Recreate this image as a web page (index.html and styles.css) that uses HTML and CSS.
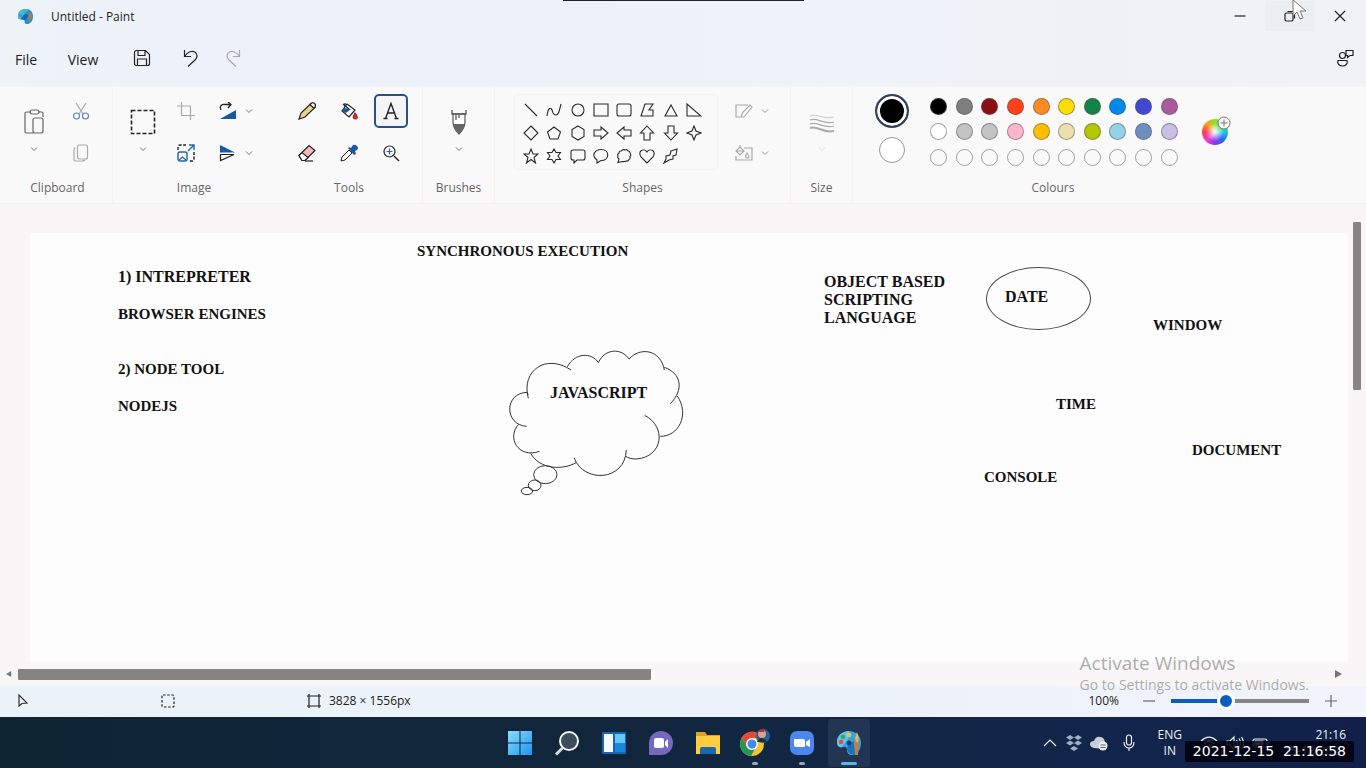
FILE: index.html
```html
<!DOCTYPE html>
<html lang="en">
<head>
<meta charset="utf-8">
<title>Untitled - Paint</title>
<link rel="stylesheet" href="styles.css">
</head>
<body>
<svg class="defs" aria-hidden="true">
  <symbol id="chev" viewBox="0 0 8 8"><path d="M1 2.500l3 3 3-3" fill="none" stroke="currentColor"/></symbol>
  <symbol id="palette" viewBox="0 0 26 26">
    <path d="M13 1C6 1 1 6 1 12c0 4 3 6 6 5 2-1 4 0 4 3 0 3 2 5 5 5 6-1 9-6 9-12C25 6 20 1 13 1z" fill="#35a3dc"/>
    <path d="M1 12C1 6 6 1 13 1l-1 8-6 8c-3 1-5-1-5-5z" fill="#67c3ee"/>
    <path d="M11 19c0-5 6-9 8-7l3 9c-2 3-9 6-11-2z" fill="#1872bd"/>
    <circle cx="7" cy="7" r="2.400" fill="#39a86a"/><circle cx="13" cy="5" r="2.400" fill="#d8c647"/><circle cx="5" cy="12" r="2.200" fill="#d5543f"/><circle cx="13" cy="13" r="2.400" fill="#0e4277"/>
    <path d="M19 8l3-1 1 6-1 12h-3l-1-12z" fill="#bd824b"/><path d="M19 8l2-6 2 6-1 4h-2z" fill="#e4b16e"/>
  </symbol>
  <symbol id="app-palette" viewBox="0 0 18 18">
    <path d="M9 1C4 1 1 4 1 9c0 3 2 3 4 3 2-1 3 0 3 2 0 3 2 3 4 3 3-1 5-4 5-8 0-5-3-8-8-8z" fill="#2090d8"/>
    <path d="M1 9c0-5 3-8 8-8l3 1-5 5-3 5C2 12 1 11 1 9z" fill="#43b9e9"/>
    <path d="M4 12l5-6 3 2-3 5z" fill="#1465ad"/>
    <circle cx="8" cy="4" r="1.600" fill="#58b96e"/><circle cx="4" cy="8" r="1.500" fill="#30a883"/>
    <path d="M13 5l2-1 1 5-2 7h-1l-1-7z" fill="#a77a59"/>
  </symbol>
</svg>
<div class="desktop">
  <header class="titlebar">
    <svg class="app-icon" viewBox="0 0 18 18"><use href="#app-palette"/></svg>
    <h1 class="title">Untitled - Paint</h1>
    <div class="win-buttons">
      <button class="win-btn" aria-label="Minimise"><svg viewBox="0 0 12 12" class="i12 line"><path d="M.5 6h11"/></svg></button>
      <button class="win-btn hovered" aria-label="Restore"><svg viewBox="0 0 12 12" class="i12 line"><rect x="1" y="3" width="8" height="8" rx="1.500"/><path d="M3.500 1.500h5a2 2 0 0 1 2 2v5"/></svg></button>
      <button class="win-btn" aria-label="Close"><svg viewBox="0 0 12 12" class="i12 line"><path d="M1 1l10 10M11 1L1 11"/></svg></button>
    </div>
  </header>
  <nav class="menubar">
    <button class="menu file">File</button>
    <button class="menu view">View</button>
    <button class="menu icon save" aria-label="Save"><svg viewBox="0 0 18 18" class="i18 line"><path d="M3.500 1.500h9l4 4v9a2 2 0 0 1-2 2h-11a2 2 0 0 1-2-2v-11a2 2 0 0 1 2-2zM5 2v4.500h7V2M4.500 16v-6h9v6"/></svg></button>
    <button class="menu icon undo" aria-label="Undo"><svg viewBox="0 0 18 18" class="i18 line"><path d="M2.500 1v6.500H9M3 7c4-6 9-5 11-3 2 3 1 5-1 7l-7 6.500"/></svg></button>
    <button class="menu icon undo faded" aria-label="Redo"><svg viewBox="0 0 18 18" class="i18 line"><path d="M15.500 1v6.500H9M15 7C11 1 6 2 4 4c-2 3-1 5 1 7l7 6.500"/></svg></button>
    <button class="menu icon share" aria-label="Account"><svg viewBox="0 0 18 18" class="i18 line"><circle cx="6.500" cy="6.500" r="3"/><path d="M2 11.500h9c1 3-1 5.500-4.500 5.500S1 14.500 2 11.500zM10 1.500h7v5h-3l-2.500 2v-2H10z"/></svg></button>
  </nav>

  <section class="ribbon" aria-label="Tools">
    <div class="group clipboard">
      <div class="content">
        <button class="big" aria-label="Paste"><svg viewBox="0 0 24 26" class="i24 line grey"><path d="M9 3H4.500A1.500 1.500 0 0 0 3 4.500v18A1.500 1.500 0 0 0 4.500 24H11M16 3h3.500A1.500 1.500 0 0 1 21 4.500V8"/><rect x="8" y="1" width="9" height="4" rx="2"/><rect x="11" y="9" width="10" height="15" rx="2"/></svg><svg class="chev"><use href="#chev"/></svg></button>
        <div class="tools one">
          <button aria-label="Cut"><svg viewBox="0 0 18 18" class="i18 line pale"><path d="M4 1l7 11M14 1L7 12"/><circle cx="4.500" cy="14" r="3" stroke="#5b87bd"/><circle cx="13.500" cy="14" r="3" stroke="#5b87bd"/></svg></button>
          <button aria-label="Copy"><svg viewBox="0 0 18 18" class="i18 line pale"><rect x="5.500" y="1" width="10" height="14" rx="2"/><path d="M3 3.500c-1 1-1 2-1 3V15a2 2 0 0 0 2 2h6c2 0 2 0 3-1"/></svg></button>
        </div>
      </div>
      <h2>Clipboard</h2>
    </div>
    <div class="group image">
      <div class="content">
        <button class="big" aria-label="Select"><svg viewBox="0 0 26 26" class="i26 line"><rect x="1.500" y="1.500" width="23" height="23" stroke-width="1.600" stroke-dasharray="4 2"/></svg><svg class="chev"><use href="#chev"/></svg></button>
        <div class="tools two">
          <button aria-label="Crop"><svg viewBox="0 0 18 18" class="i18 line pale"><path d="M4.500 0v13.500H18M0 4h13.500V18"/></svg></button>
          <button class="wide" aria-label="Rotate"><svg viewBox="0 0 18 18" class="i18"><path d="M2 8C0 4 3 2 6 2.500h5M9 0l3 2.500L9 6" fill="none" stroke="#222" stroke-width="1.300"/><path d="M17 8v9H1z" fill="#1857a8"/></svg><svg class="chev"><use href="#chev"/></svg></button>
          <button aria-label="Resize"><svg viewBox="0 0 18 18" class="i18 line"><path d="M1 6V3q0-2 2-2h6M17 8v7q0 2-2 2h-3" stroke-dasharray="3 1.500" stroke-width="1.400"/><path d="M11 7l6-6m-5 0h5v5" stroke="#1d65ad" stroke-width="1.400"/><rect x="1" y="8" width="9" height="9" rx="2" stroke="#1d65ad" stroke-width="1.400"/><path d="M2 16l3.500-3L9 16" stroke="#1d65ad"/></svg></button>
          <button class="wide" aria-label="Flip"><svg viewBox="0 0 18 18" class="i18"><path d="M1 1l15 7.500H1z" fill="#1857a8"/><path d="M1.500 10.500H15L1.500 16.500z" fill="none" stroke="#222" stroke-width="1.200"/></svg><svg class="chev"><use href="#chev"/></svg></button>
        </div>
      </div>
      <h2>Image</h2>
    </div>
    <div class="group toolbox">
      <div class="content">
        <div class="tools three">
          <button aria-label="Pencil"><svg viewBox="0 0 18 18" class="i18 line"><path d="M1 17l2-6L13 1.500q2-1 3.500.5t.5 3.500L7 15z" fill="#ecd28a"/><path d="M12 2.500L15.500 6l1.500-1q1-2-.5-3.500T13 1.500z" fill="#fff"/></svg></button>
          <button aria-label="Fill"><svg viewBox="0 0 18 18" class="i18 line"><path d="M7 2l8 6-6 7-7-6z" fill="#fff"/><path d="M4 6l7 1-5 4-4-2z" fill="#1857a8" stroke="none"/><path d="M3 2l6 5M5 1v4"/><path d="M15 11q4 5 1 6-4 0-2-4z" fill="#d13a1f" stroke="#922"/></svg></button>
          <button class="active" aria-label="Text"><svg viewBox="0 0 18 18" class="i18 line"><path d="M3.500 16.500L9 1.500l5.500 15M5.500 11h7M1.500 16.500h4M12.500 16.500h4" stroke-width="1.400"/></svg></button>
          <button aria-label="Eraser"><svg viewBox="0 0 18 18" class="i18 line"><path d="M1 11.500L11 1.500l6 5L7 16.500H4z" fill="#f4b7bb"/><path d="M1 11.500l3-3 6 5-3 3H4z" fill="#fff"/><path d="M7 17h8"/></svg></button>
          <button aria-label="Colour picker"><svg viewBox="0 0 18 18" class="i18"><path d="M1 17l1-4 7-7 3 3-7 7z" fill="#fff" stroke="#222"/><path d="M8 4l1-1 2 1 2-3q2-1 4 1t0 4l-2 1 1 3-2 1z" fill="#1857a8"/></svg></button>
          <button aria-label="Magnifier"><svg viewBox="0 0 18 18" class="i18 line"><circle cx="7.500" cy="7.500" r="5.500"/><path d="M12 12l5 5" stroke-width="1.400"/><path d="M7.500 4.500v6M4.500 7.500h6" stroke="#276c8d"/></svg></button>
        </div>
      </div>
      <h2>Tools</h2>
    </div>
    <div class="group brushes">
      <div class="content">
        <button class="big" aria-label="Brushes"><svg viewBox="0 0 24 26" class="i24 line"><path d="M6 5h12v8c0 5-3 9-6 12-3-3-6-7-6-12z" fill="#fff" stroke="#555"/><path d="M6 15h12c-1 4-3 7-6 10-3-3-5-6-6-10z" fill="#666" stroke="none"/><path d="M5 1v4h14V1M9 6v5M12 6v3" stroke="#555" stroke-width="1.300"/></svg><svg class="chev"><use href="#chev"/></svg></button>
      </div>
      <h2>Brushes</h2>
    </div>
    <div class="group shapes">
      <div class="content">
        <div class="gallery">
          <button aria-label="Line"><svg viewBox="0 0 16 16"><path d="M2 2l12 12"/></svg></button>
          <button aria-label="Curve"><svg viewBox="0 0 16 16"><path d="M1 14C2 5 5 5 6 8s1 5 4 5 3-4 5-11"/></svg></button>
          <button aria-label="Oval"><svg viewBox="0 0 16 16"><circle cx="8" cy="8" r="6"/></svg></button>
          <button aria-label="Rectangle"><svg viewBox="0 0 16 16"><path d="M1 2h14v12H1z"/></svg></button>
          <button aria-label="Rounded rectangle"><svg viewBox="0 0 16 16"><rect x="1" y="2" width="14" height="12" rx="2"/></svg></button>
          <button aria-label="Polygon"><svg viewBox="0 0 16 16"><path d="M6 2h8l-4 6h4v6H2z"/></svg></button>
          <button aria-label="Triangle"><svg viewBox="0 0 16 16"><path d="M8 3l6 11H2z"/></svg></button>
          <button aria-label="Right triangle"><svg viewBox="0 0 16 16"><path d="M1 2v12h14z"/></svg></button>
          <button aria-label="Diamond"><svg viewBox="0 0 16 16"><path d="M8 1l7 7-7 7-7-7z"/></svg></button>
          <button aria-label="Pentagon"><svg viewBox="0 0 16 16"><path d="M8 2l6.500 5-2.500 7H4L1.500 7z"/></svg></button>
          <button aria-label="Hexagon"><svg viewBox="0 0 16 16"><path d="M8 1l6 3.500v7L8 15l-6-3.500v-7z"/></svg></button>
          <button aria-label="Right arrow"><svg viewBox="0 0 16 16"><path d="M1 5h7V2l7 6-7 6v-3H1z"/></svg></button>
          <button aria-label="Left arrow"><svg viewBox="0 0 16 16"><path d="M15 5H8V2L1 8l7 6v-3h7z"/></svg></button>
          <button aria-label="Up arrow"><svg viewBox="0 0 16 16"><path d="M5 15V8H1.500L8 1l6.500 7H11v7z"/></svg></button>
          <button aria-label="Down arrow"><svg viewBox="0 0 16 16"><path d="M5 1v7H1.500L8 15l6.500-7H11V1z"/></svg></button>
          <button aria-label="Four-point star"><svg viewBox="0 0 16 16"><path d="M8 1l2 5 5 2-5 2-2 5-2-5-5-2 5-2z"/></svg></button>
          <button aria-label="Five-point star"><svg viewBox="0 0 16 16"><path d="M8 1l2 5h5l-4 3.500L12.500 15 8 11.500 3.500 15 5 9.500 1 6h5z"/></svg></button>
          <button aria-label="Six-point star"><svg viewBox="0 0 16 16"><path d="M8 1l2 3.500h4.500L12 8l2.500 3.500H10L8 15l-2-3.500H1.500L4 8 1.500 4.500H6z"/></svg></button>
          <button aria-label="Rounded callout"><svg viewBox="0 0 16 16"><path d="M3 2h10q2 0 2 2v6q0 2-2 2H7l-3 3v-3H3q-2 0-2-2V4q0-2 2-2z"/></svg></button>
          <button aria-label="Oval callout"><svg viewBox="0 0 16 16"><path d="M4 12C-3 7 3 1.500 8 1.500c9 0 9 11 0 11L4 15z"/></svg></button>
          <button aria-label="Cloud callout"><svg viewBox="0 0 16 16"><path d="M3 11Q1 9.500 2 8 1 6 3 5q0-2 2-2 2-2 4-1 2-1 3 1 2 0 2 2 1.500 2 0 3.500.5 2-1 3-1 2-3 1.500-2 1-4 .5l-4 1z"/></svg></button>
          <button aria-label="Heart"><svg viewBox="0 0 16 16"><path d="M8 15L2 9C-2 3 5-.5 8 4c3-4.500 10-1 6 5z"/></svg></button>
          <button aria-label="Lightning"><svg viewBox="0 0 16 16"><path d="M8 3l6-2-1 6-3 1v3l-4 1-5 3 2-4V8l4-1z"/></svg></button>
        </div>
        <div class="tools one">
          <button class="wide faded" aria-label="Outline"><svg viewBox="0 0 18 18" class="i18 line"><path d="M13 3H1v12h8l8-10-2-2-7 7-2 5"/></svg><svg class="chev"><use href="#chev"/></svg></button>
          <button class="wide faded" aria-label="Shape fill"><svg viewBox="0 0 18 18" class="i18 line"><path d="M9 4h8v12H1v-4"/><path d="M1 7l4-4 4 4-4 4zM5 1v3M1 7h8M12 9q4 5 0 5-3-1 0-5z"/></svg><svg class="chev"><use href="#chev"/></svg></button>
        </div>
      </div>
      <h2>Shapes</h2>
    </div>
    <div class="group size">
      <div class="content">
        <button class="big faded" aria-label="Size"><svg viewBox="0 0 24 26" class="i24 line"><path d="M0 7c8-3 13 4 24 1" stroke-width=".6"/><path d="M0 11c8-3 13 5 24 2M0 15c8-3 13 5 24 2"/><path d="M0 19c8-3 13 6 24 3" stroke-width="2"/></svg><svg class="chev"><use href="#chev"/></svg></button>
      </div>
      <h2>Size</h2>
    </div>
    <div class="group colours">
      <div class="content">
        <div class="current">
          <button class="primary" aria-label="Colour 1"></button>
          <button class="secondary" aria-label="Colour 2"></button>
        </div>
        <div class="swatches">
          <button class="c-black" aria-label="Black"></button><button class="c-grey" aria-label="Grey"></button><button class="c-maroon" aria-label="Dark red"></button><button class="c-red" aria-label="Red"></button><button class="c-orange" aria-label="Orange"></button><button class="c-yellow" aria-label="Yellow"></button><button class="c-green" aria-label="Green"></button><button class="c-blue" aria-label="Turquoise"></button><button class="c-indigo" aria-label="Indigo"></button><button class="c-purple" aria-label="Purple"></button>
          <button class="c-white" aria-label="White"></button><button class="c-silver" aria-label="Light grey"></button><button class="c-silver" aria-label="Brown"></button><button class="c-rose" aria-label="Rose"></button><button class="c-gold" aria-label="Gold"></button><button class="c-cream" aria-label="Light yellow"></button><button class="c-lime" aria-label="Lime"></button><button class="c-sky" aria-label="Light turquoise"></button><button class="c-steel" aria-label="Blue grey"></button><button class="c-lavender" aria-label="Lavender"></button>
          <button aria-label="Custom 1"></button><button aria-label="Custom 2"></button><button aria-label="Custom 3"></button><button aria-label="Custom 4"></button><button aria-label="Custom 5"></button><button aria-label="Custom 6"></button><button aria-label="Custom 7"></button><button aria-label="Custom 8"></button><button aria-label="Custom 9"></button><button aria-label="Custom 10"></button>
        </div>
        <button class="wheel" aria-label="Edit colours"><span class="hue"></span><svg class="plus" viewBox="0 0 14 14"><circle cx="7" cy="7" r="6" fill="#fafafa" stroke="#777"/><path d="M7 3.500v7M3.500 7h7" stroke="#777"/></svg></button>
      </div>
      <h2>Colours</h2>
    </div>
  </section>

  <main class="workspace">
    <div class="viewport">
      <div class="canvas">
        <span class="word w-sync">SYNCHRONOUS EXECUTION</span>
        <span class="word large w-interp">1) INTREPRETER</span>
        <span class="word w-browser">BROWSER ENGINES</span>
        <span class="word w-tool">2) NODE TOOL</span>
        <span class="word w-node">NODEJS</span>
        <svg class="cloud" viewBox="0 0 630 510"><path d="M115 175C92 90 170 40 243 90M232 80C255 38 305 36 325 68M325 68C345 24 395 24 417 57M417 57C450 20 512 28 523 90M523 82C575 100 582 150 541 191M562 168C600 225 565 290 511 289M464 226C530 260 520 350 440 357C425 357 415 354 407 349M409 330C405 425 280 430 252 353M258 368C220 390 150 390 122 340M149 334C82 357 50 290 86 253M110 259C42 255 42 158 112 157L114 165"/><ellipse cx="166" cy="404" rx="35" ry="27"/><ellipse cx="134" cy="436" rx="19" ry="16"/><ellipse cx="111" cy="453" rx="17" ry="11"/></svg>
        <span class="word large w-js">JAVASCRIPT</span>
        <span class="word large w-object">OBJECT BASED<br>SCRIPTING<br>LANGUAGE</span>
        <span class="oval"></span>
        <span class="word large w-date">DATE</span>
        <span class="word w-window">WINDOW</span>
        <span class="word w-time">TIME</span>
        <span class="word w-document">DOCUMENT</span>
        <span class="word w-console">CONSOLE</span>
      </div>
    </div>
    <div class="vscroll"><div class="vthumb"></div></div>
    <div class="hscroll">
      <svg class="arrow" viewBox="0 0 8 8"><path d="M7 0v8L0 4z"/></svg>
      <div class="htrack"><div class="hthumb"></div></div>
      <svg class="arrow" viewBox="0 0 8 8"><path d="M1 0v8l7-4z"/></svg>
    </div>
  </main>

  <footer class="statusbar">
    <div class="cell pointer"><svg viewBox="0 0 14 14" class="i14 line"><path d="M3 1v11l3-2.500 5-.5z"/></svg></div>
    <div class="cell selection"><svg viewBox="0 0 14 14" class="i14 line"><rect x="1" y="1" width="12" height="12" rx="1" stroke-dasharray="2.500 1.700"/></svg></div>
    <div class="cell"><svg viewBox="0 0 14 14" class="i14 line"><path d="M0 2h14M0 12h14M2 0v14M12 0v14"/></svg><span>3828 × 1556px</span></div>
    <div class="zoom">
      <label for="zoom">100%</label>
      <button aria-label="Zoom out"><svg viewBox="0 0 12 12" class="i12 line grey"><path d="M0 6h12"/></svg></button>
      <input id="zoom" type="range" min="0" max="100" value="38">
      <button aria-label="Zoom in"><svg viewBox="0 0 12 12" class="i12 line grey"><path d="M0 6h12M6 0v12"/></svg></button>
    </div>
    <div class="watermark"><strong>Activate Windows</strong><span>Go to Settings to activate Windows.</span></div>
  </footer>

  <div class="taskbar">
    <div class="apps">
      <button aria-label="Start"><svg viewBox="0 0 26 26"><defs><linearGradient id="win" x2="1" y2="1"><stop stop-color="#8bdcff"/><stop offset="1" stop-color="#1c95ee"/></linearGradient></defs><path fill="url(#win)" d="M1 1h11.500v11.500H1zM13.500 1H25v11.500H13.500zM1 13.500h11.500V25H1zM13.500 13.500H25V25H13.500z"/></svg></button>
      <button aria-label="Search"><svg viewBox="0 0 26 26"><circle cx="15" cy="11" r="9" fill="#3b4c5a" stroke="#f1f5f7" stroke-width="2"/><path d="M8.500 18L2 24.500" stroke="#d5dde2" stroke-width="3"/></svg></button>
      <button aria-label="Widgets"><svg viewBox="0 0 26 26"><rect x="1" y="2" width="24" height="22" rx="1" fill="#1565b3"/><path d="M3 4h9v18H3z" fill="#f5f9fc"/><path d="M14 4h10v9H14z" fill="#64c8fa"/><path d="M14 13h10v9H14z" fill="#1688de"/></svg></button>
      <button aria-label="Chat"><svg viewBox="0 0 26 26"><path d="M1 25V13a12 12 0 1 1 12 12z" fill="#7568bd"/><rect x="6" y="8" width="10" height="10" rx="2" fill="#fff"/><path d="M17 12l3-3v9l-3-3z" fill="#fff"/></svg></button>
      <button aria-label="File Explorer"><svg viewBox="0 0 26 26"><path d="M1 2h9l2 3h13v18H1z" fill="#dda126"/><path d="M1 6h24v18H1z" fill="#ffcc42"/><path d="M5 24v-5q0-2 2-2h12q2 0 2 2v5z" fill="#1769b0"/></svg></button>
      <button class="running" aria-label="Chrome"><svg class="chrome" viewBox="0 0 32 30"><circle cx="13" cy="16" r="12" fill="#f2c52f"/><path d="M2.600 10A12 12 0 0 1 24 10H13l-5 8z" fill="#e04c36"/><path d="M2.600 10A12 12 0 0 0 12 28l5-9-9-1z" fill="#239657"/><circle cx="13" cy="16" r="6" fill="#fff"/><circle cx="13" cy="16" r="4.500" fill="#4389ea"/><circle cx="24" cy="8" r="7" fill="#245f9d"/><circle cx="23" cy="6" r="4" fill="#d9a38b"/><path d="M19 4q2-4 7-3l-1 3z" fill="#b92d39"/><path d="M18 14q4-8 10 0z" fill="#292930"/></svg></button>
      <button class="running" aria-label="Zoom"><svg viewBox="0 0 26 26"><rect x="1" y="1" width="24" height="24" rx="7" fill="#4b87ee"/><path d="M5 9h9q2 0 2 2v6H7q-2 0-2-2zM17 12l4-3v8l-4-2z" fill="#fff"/></svg></button>
      <button class="current-app" aria-label="Paint"><svg viewBox="0 0 26 26"><use href="#palette"/></svg></button>
    </div>
    <div class="tray">
      <svg viewBox="0 0 16 16" class="i16 line"><path d="M2 11l6-6 6 6"/></svg>
      <svg viewBox="0 0 16 16" class="i16" fill="#9fb0bf"><path d="M4 0l4 2.500L4 5 0 2.500zM12 0l4 2.500L12 5 8 2.500zM4 5.500L8 8l-4 2.500L0 8zM12 5.500L16 8l-4 2.500L8 8zM8 11l4 2.500L8 16l-4-2.500z"/></svg>
      <svg viewBox="0 0 18 16" class="i18"><path d="M4 13q-4-1-4-4t4-3q2-5 6-4 4 0 5 5 3 1 2 4l-3 3z" fill="#c6ced6"/><circle cx="13" cy="11" r="4.500" fill="#e8edf2"/><path d="M10.500 10h5M10.500 12.500h5" stroke="#567"/></svg>
      <svg viewBox="0 0 14 18" class="i18 line mic"><rect x="4.500" y="1" width="5" height="10" rx="2.500"/><path d="M2 8c0 8 10 8 10 0M7 14v3"/></svg>
      <div class="lang">ENG<br>IN</div>
      <svg viewBox="0 0 18 16" class="i18 line"><path d="M1 6q8-8 16 0M4 9q5-5 10 0M6.500 12q2.500-3 5 0"/></svg>
      <svg viewBox="0 0 18 16" class="i18 line"><path d="M1 6h3l4-4v12l-4-4H1zM10.500 5q2 3 0 6M13 3.500q3 4.500 0 9M15.500 2q4 6 0 12"/></svg>
      <svg viewBox="0 0 18 16" class="i18 line"><rect x="1" y="4" width="14" height="8" rx="2"/><path d="M3 6h8v4H3z" fill="currentColor"/><path d="M17 6v4"/></svg>
      <div class="clock">21:16<br>15-12-2021</div>
    </div>
    <div class="stamp">2021-12-15  21:16:58</div>
  </div>

  <div class="edge"></div>
  <svg class="mouse" viewBox="0 0 16 22"><path d="M2 1v16l4-4 3 7 3-1-3-7h6z" fill="#fff" stroke="#777"/></svg>
</div>
</body>
</html>
```
FILE: styles.css
```css
* { box-sizing: border-box; }
body {
  margin: 0;
  font-family: "Open Sans", "Noto Sans", sans-serif;
  font-size: 12px;
  color: #222;
}
button {
  border: 0;
  padding: 0;
  background: none;
  font: inherit;
  color: inherit;
  display: flex;
  align-items: center;
  justify-content: center;
}
svg { display: block; flex: none; }
.defs { position: absolute; width: 0; height: 0; }
.line { fill: none; stroke: currentColor; stroke-width: 1.2; }
.i12 { width: 12px; height: 12px; }
.i14 { width: 14px; height: 14px; }
.i16 { width: 16px; height: 16px; }
.i18 { width: 18px; height: 18px; }
.i24 { width: 24px; height: 26px; }
.i26 { width: 26px; height: 26px; }
.grey { color: #666; }
.pale { color: #aaa; }
.faded { color: #aaa; }

.desktop {
  position: relative;
  display: flex;
  flex-direction: column;
  height: 100vh;
  overflow: hidden;
  background: linear-gradient(90deg, #edf3f7, #ecf1fa 20%, #eef3f9 60%, #eff2f6);
}

/* Window caption and menu */
.titlebar { display: flex; align-items: center; height: 32px; padding-left: 17px; }
.app-icon { width: 17px; height: 17px; }
.title { margin: 0 0 0 17px; font-size: 12px; font-weight: 400; }
.win-buttons { display: flex; margin-left: auto; padding-right: 1px; }
.win-btn { width: 50px; height: 30px; }
.hovered { background: #ebeef2; }
.menubar { display: flex; height: 54px; }
.menu { height: 54px; font-size: 14px; }
.icon { padding-bottom: 3px; }
.file { width: 52px; }
.view { width: 62px; }
.save { width: 56px; }
.undo { width: 42px; }
.share { width: 42px; margin-left: auto; }

/* Ribbon */
.ribbon {
  display: flex;
  height: 118px;
  padding-left: 3px;
  background: #faf9f9;
  border-top: 1px solid #f3f5f9;
  border-bottom: 1px solid #f0eeee;
}
.group { display: flex; flex-direction: column; align-items: center; border-right: 1px solid #f4f2f2; }
.group h2 { margin: 8px 0 0; font-size: 12px; line-height: 18px; font-weight: 400; color: #666; }
.content { display: flex; height: 84px; padding-top: 7px; align-items: flex-start; }
.clipboard { width: 110px; }
.image { width: 163px; border-color: transparent; }
.toolbox { width: 147px; }
.brushes { width: 72px; }
.shapes { width: 296px; }
.size { width: 62px; }
.colours { width: 401px; border-color: transparent; }
.clipboard .content { gap: 13px; }
.image .content { gap: 9px; }
.shapes .content { gap: 9px; padding-left: 6px; }
.big { flex-direction: column; justify-content: flex-start; width: 34px; height: 76px; padding-top: 15px; gap: 10px; }
.chev { width: 8px; height: 8px; color: #777; }
.faded .chev { color: #999; }
.size .chev { color: #ddd; }
.tools { display: grid; gap: 8px; }
.two { grid-template-columns: 34px 51px; }
.three { grid-template-columns: 34px 34px 34px; }
.tools button { width: 34px; height: 34px; border-radius: 5px; }
.tools .wide { width: 51px; justify-content: flex-start; padding-left: 8px; gap: 8px; }
.tools .active { border: 2px solid #2b5088; background: #f5f5f7; }
.gallery {
  display: grid;
  grid-template-columns: repeat(8, 1fr);
  grid-auto-rows: 23px;
  width: 204px;
  height: 76px;
  padding: 3px 11px 0 5px;
  border: 1px solid #f3f1f1;
  border-radius: 4px;
}
.gallery svg { width: 16px; height: 16px; fill: none; stroke: #2a2a2a; stroke-width: 1.1; }
.colours .content { gap: 17px; }
.current { display: flex; flex-direction: column; align-items: center; gap: 9px; }
.primary { width: 34px; height: 34px; border-radius: 50%; border: 2px solid #33415c; background: #000; box-shadow: inset 0 0 0 3px #fff; }
.secondary { width: 26px; height: 26px; border-radius: 50%; border: 1px solid #999; background: #fff; }
.swatches {
  display: grid;
  grid-template-columns: repeat(10, 1fr);
  grid-template-rows: repeat(3, 1fr);
  place-items: center;
  width: 256px;
  height: 76px;
}
.swatches button { width: 17px; height: 17px; border-radius: 50%; border: 1px solid rgba(90, 90, 90, .55); }
.c-black { background: #000; }
.c-grey { background: #7f7f7f; }
.c-maroon { background: #8b1014; }
.c-red { background: #ff4019; }
.c-orange { background: #ff8a24; }
.c-yellow { background: #fddc00; }
.c-green { background: #128348; }
.c-blue { background: #0088ec; }
.c-indigo { background: #4049d0; }
.c-purple { background: #ab5a9e; }
.c-white { background: #fff; }
.c-silver { background: #c3c3c3; }
.c-rose { background: #ffb5c7; }
.c-gold { background: #ffbd00; }
.c-cream { background: #ebe0ac; }
.c-lime { background: #b1c700; }
.c-sky { background: #94d2e8; }
.c-steel { background: #6c8fc0; }
.c-lavender { background: #c8bfe7; }
.wheel { position: relative; width: 32px; height: 76px; }
.hue {
  width: 26px;
  height: 26px;
  border-radius: 50%;
  background: radial-gradient(#fff, transparent 50%), conic-gradient(#8de32c, #35d95b, #18c8de 90deg, #236af0, #8b36f2 180deg, #ed3fd4, #ff3c4c 270deg, #ff9c21, #8de32c);
}
.plus { position: absolute; width: 14px; height: 14px; right: 0; top: 22px; }

/* Drawing area */
.workspace {
  flex: 1;
  min-height: 0;
  display: grid;
  grid-template-columns: 1fr 18px;
  grid-template-rows: 1fr 24px;
  background: #f8f6f6;
}
.viewport { padding: 29px 0 0 30px; min-width: 0; overflow: hidden; }
.canvas { position: relative; height: 100%; background: #fefdfd; }
.word {
  position: absolute;
  font-family: "Liberation Serif", serif;
  font-size: 15px;
  line-height: 18px;
  font-weight: 700;
  color: #111;
  white-space: nowrap;
}
.large { font-size: 16px; }
.w-sync { left: 387px; top: 9px; }
.w-interp { left: 88px; top: 35px; }
.w-browser { left: 88px; top: 72px; }
.w-tool { left: 88px; top: 127px; }
.w-node { left: 88px; top: 164px; }
.w-js { left: 520px; top: 151px; }
.w-object { left: 794px; top: 40px; }
.w-date { left: 975px; top: 55px; }
.w-window { left: 1123px; top: 83px; }
.w-time { left: 1026px; top: 162px; }
.w-document { left: 1162px; top: 208px; }
.w-console { left: 954px; top: 235px; }
.cloud { position: absolute; left: 460px; top: 107px; width: 210px; height: 170px; fill: none; stroke: #333; stroke-width: 3; }
.oval { position: absolute; left: 956px; top: 34px; width: 105px; height: 63px; border: 1px solid #444; border-radius: 50%; }
.vscroll { padding: 18px 5px; }
.vthumb { height: 168px; background: #868484; border-radius: 1px; }
.hscroll { grid-column: 1 / 3; display: flex; align-items: center; gap: 6px; padding: 0 24px 0 6px; }
.arrow { width: 6px; height: 8px; fill: #777; }
.arrow:last-child { width: 8px; }
.htrack { flex: 1; }
.hthumb { width: 48.3%; height: 11px; background: #868383; border-radius: 1px; }

/* Status bar */
.statusbar { position: relative; display: flex; align-items: center; height: 31px; padding-bottom: 2px; background: linear-gradient(90deg, #eaf3f8, #ecf2f9 60%, #f1f4fa); }
.cell { display: flex; align-items: center; gap: 8px; }
.pointer { width: 161px; padding-left: 16px; color: #333; }
.selection { width: 146px; }
.zoom { display: flex; align-items: center; gap: 16px; margin-left: auto; padding-right: 29px; }
.zoom label { margin-right: 8px; }
.zoom input {
  appearance: none;
  width: 138px;
  height: 18px;
  margin: 0;
  background: linear-gradient(90deg, #0a5fbe 38%, #868686 38%) center / 100% 4px no-repeat;
}
.zoom input::-webkit-slider-thumb { appearance: none; width: 18px; height: 18px; border-radius: 50%; border: 3px solid #fff; background: #0a5fbe; }
.watermark { position: absolute; right: 57px; bottom: 22px; display: flex; flex-direction: column; color: rgba(120, 120, 120, .6); }
.watermark strong { font-size: 19px; line-height: 24px; font-weight: 400; }
.watermark span { font-size: 14px; line-height: 20px; }

/* Taskbar */
.taskbar {
  position: relative;
  display: grid;
  grid-template-columns: 1fr auto 1fr;
  align-items: center;
  height: 51px;
  background: linear-gradient(90deg, #0f2433, #11263a 40%, #12264a 75%, #10204a);
  color: #eef2f6;
}
.apps { grid-column: 2; display: flex; }
.apps button { position: relative; width: 47px; height: 48px; }
.apps svg { width: 26px; height: 26px; }
.apps .chrome { width: 32px; height: 30px; }
.running::after, .current-app::after {
  content: "";
  position: absolute;
  bottom: 2px;
  width: 6px;
  height: 3px;
  border-radius: 2px;
  background: #9ba8b3;
}
.apps .current-app { background: rgba(255, 255, 255, .07); border-radius: 4px; width: 42px; margin-left: 3px; }
.current-app::after { width: 16px; background: #58b5e8; }
.tray { display: flex; align-items: center; justify-content: flex-end; gap: 8px; padding-right: 20px; }
.mic { margin-left: 4px; }
.lang { margin: 0 10px 0 12px; text-align: center; line-height: 16px; }
.clock { width: 68px; text-align: right; line-height: 16px; white-space: nowrap; }
.stamp {
  position: absolute;
  right: 12px;
  bottom: 6px;
  padding: 0 8px;
  border-radius: 2px;
  background: rgba(0, 0, 12, .85);
  color: #fff;
  font-family: "DejaVu Sans", sans-serif;
  font-size: 14px;
  line-height: 21px;
  white-space: pre;
}

.edge { position: absolute; left: 50%; top: 0; width: 241px; height: 1px; margin-left: -120px; background: #222; }
.mouse { position: absolute; right: 59px; top: -1px; width: 16px; height: 22px; }
```
